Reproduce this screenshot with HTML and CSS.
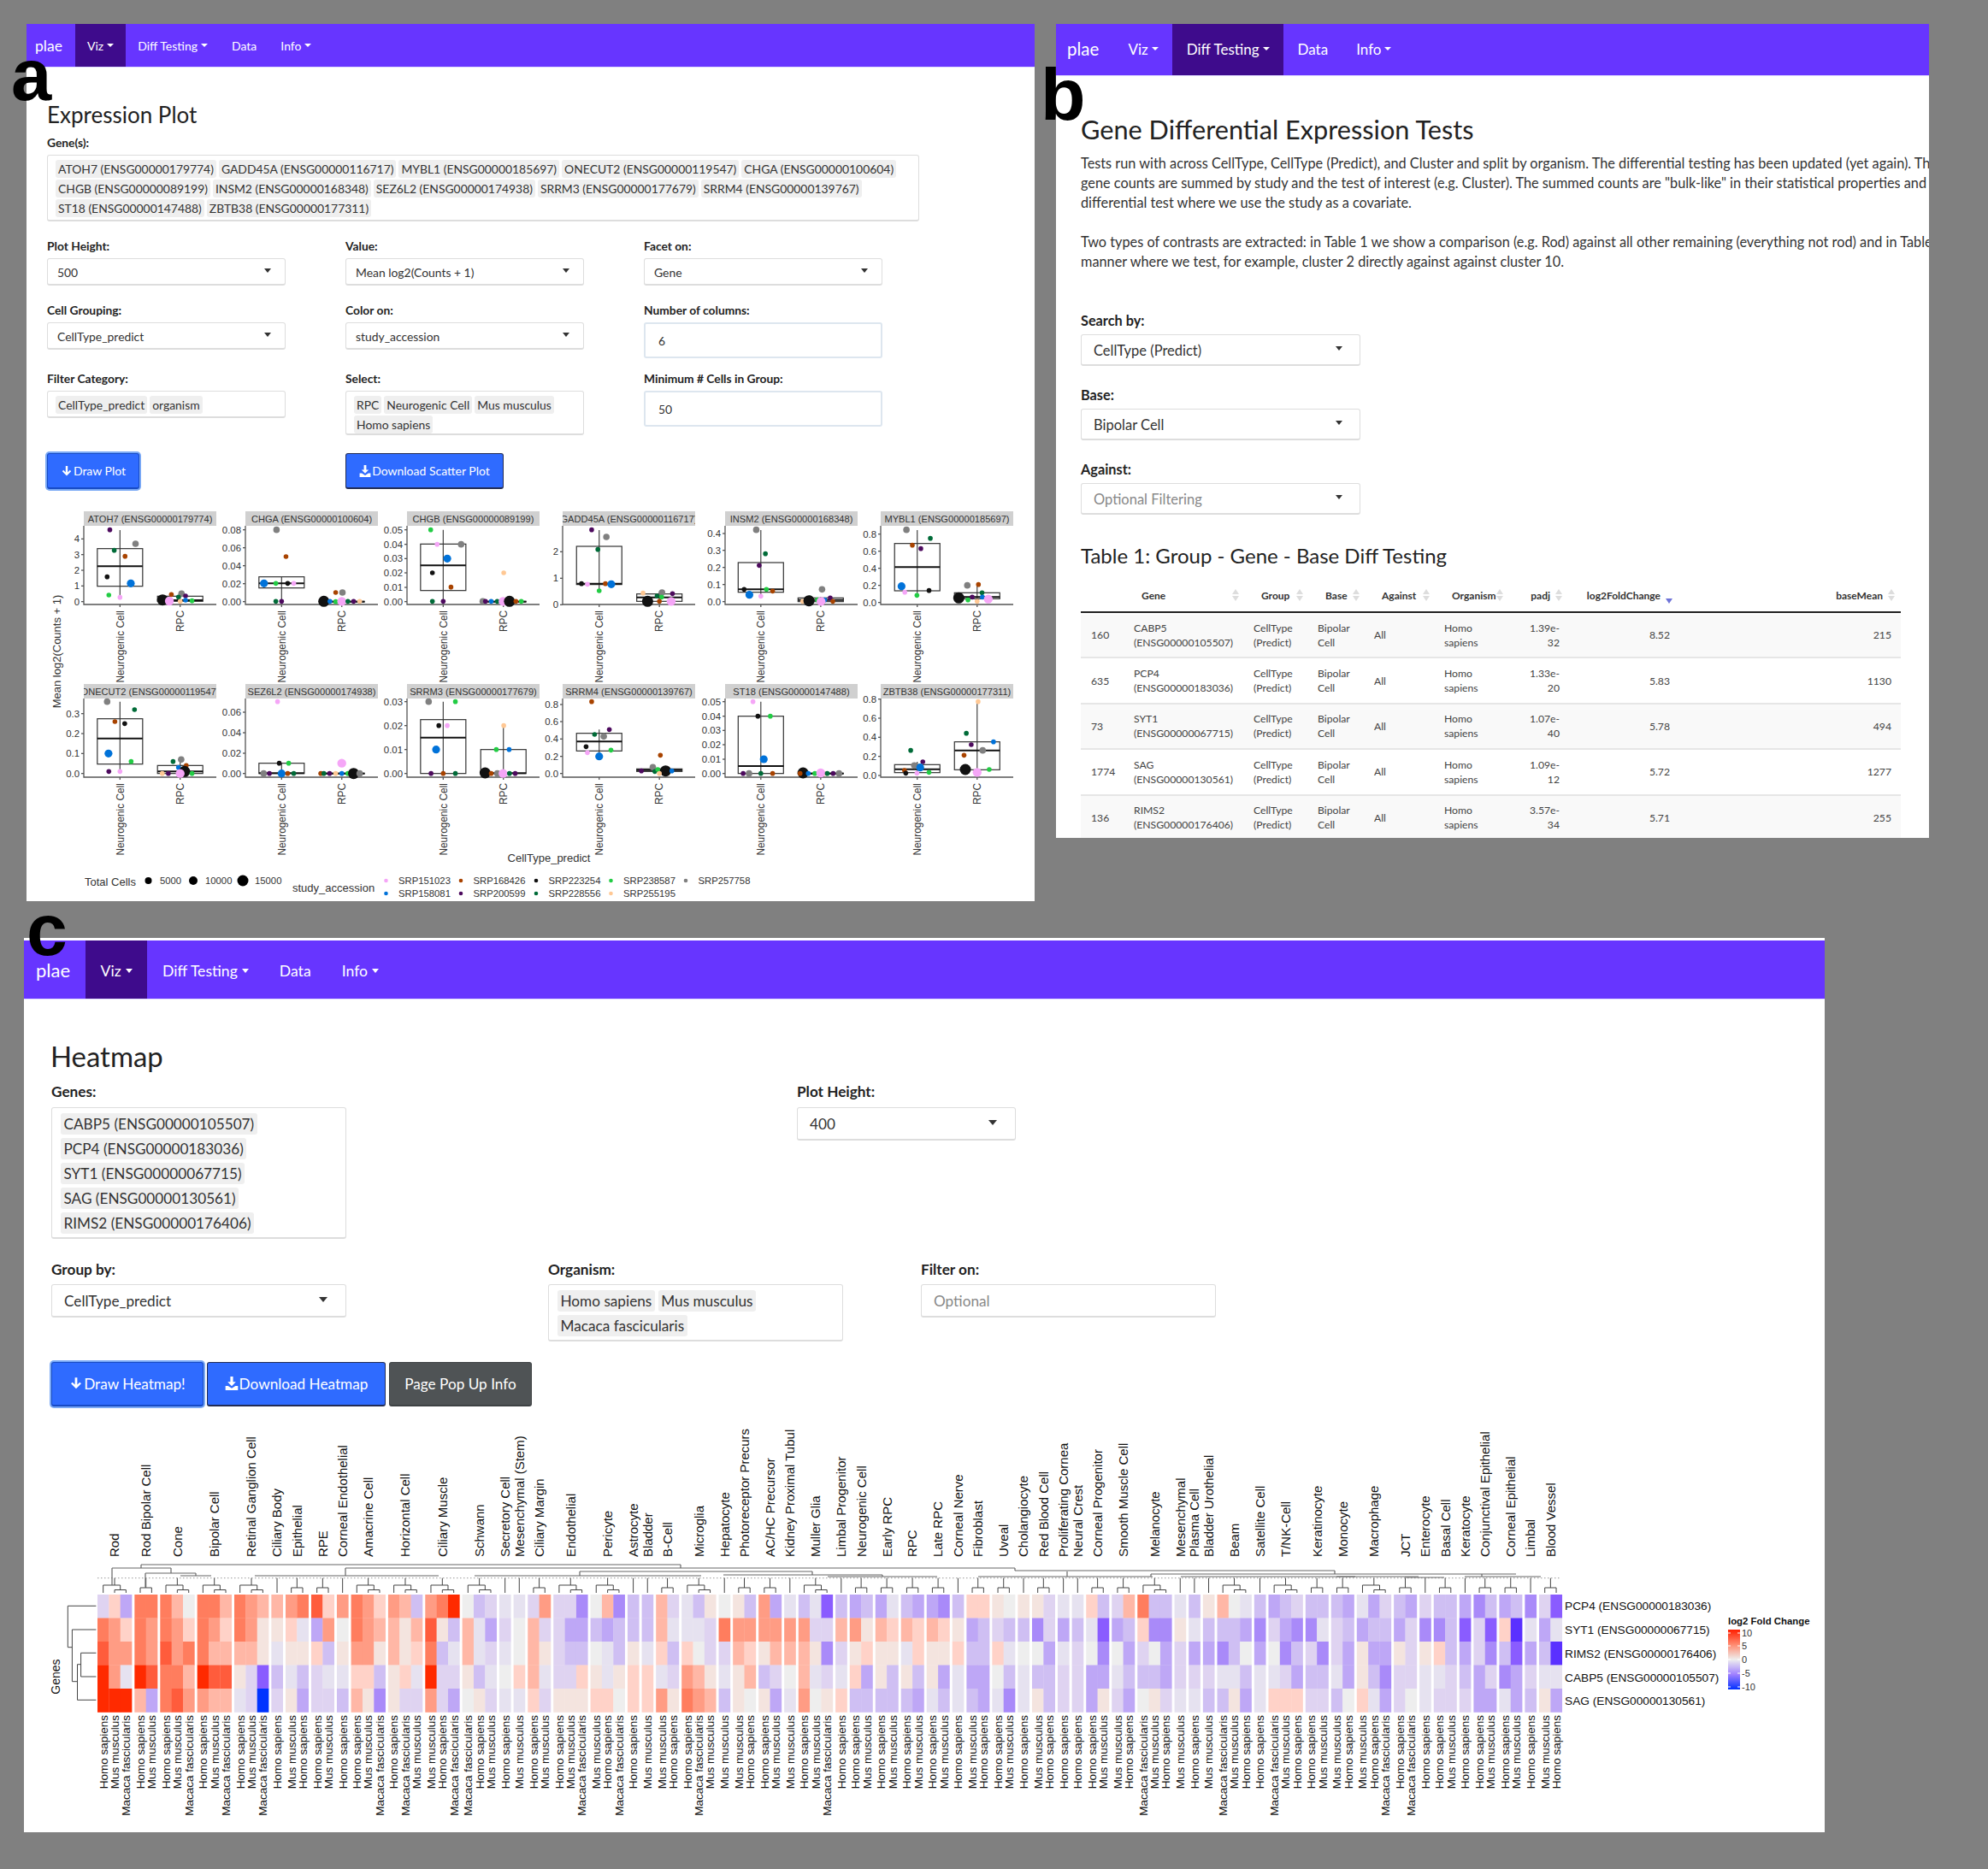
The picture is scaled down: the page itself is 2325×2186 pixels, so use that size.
FILE: index.html
```html
<!DOCTYPE html>
<html lang="en">
<head>
    <meta charset="UTF-8">
    <title>plae</title>
    <link rel="stylesheet" href="styles.css">
</head>
<body>

    <div class="top-row">

        <!-- a: expression plot -->
        <div class="panel panel-a">
            <span class="fig-label">a</span>
            <nav class="navbar">
                <span class="brand">plae</span>
                <a class="nav-item active">Viz<i class="caret"></i></a>
                <a class="nav-item">Diff Testing<i class="caret"></i></a>
                <a class="nav-item">Data</a>
                <a class="nav-item">Info<i class="caret"></i></a>
            </nav>
            <div class="content">
                <h2>Expression Plot</h2>
                <label>Gene(s):</label>
                <div class="tagbox gene-box">
                    <span class="tag">ATOH7 (ENSG00000179774)</span>
                    <span class="tag">GADD45A (ENSG00000116717)</span>
                    <span class="tag">MYBL1 (ENSG00000185697)</span>
                    <span class="tag">ONECUT2 (ENSG00000119547)</span>
                    <span class="tag">CHGA (ENSG00000100604)</span>
                    <span class="tag">CHGB (ENSG00000089199)</span>
                    <span class="tag">INSM2 (ENSG00000168348)</span>
                    <span class="tag">SEZ6L2 (ENSG00000174938)</span>
                    <span class="tag">SRRM3 (ENSG00000177679)</span>
                    <span class="tag">SRRM4 (ENSG00000139767)</span>
                    <span class="tag">ST18 (ENSG00000147488)</span>
                    <span class="tag">ZBTB38 (ENSG00000177311)</span>
                </div>
                <div class="form-grid">
                    <div><label>Plot Height:</label><div class="select">500</div></div>
                    <div><label>Value:</label><div class="select">Mean log2(Counts + 1)</div></div>
                    <div><label>Facet on:</label><div class="select">Gene</div></div>
                    <div><label>Cell Grouping:</label><div class="select">CellType_predict</div></div>
                    <div><label>Color on:</label><div class="select">study_accession</div></div>
                    <div><label>Number of columns:</label><div class="number">6</div></div>
                    <div>
                        <label>Filter Category:</label>
                        <div class="tagbox"><span class="tag">CellType_predict</span><span class="tag">organism</span></div>
                    </div>
                    <div>
                        <label>Select:</label>
                        <div class="tagbox">
                            <span class="tag">RPC</span><span class="tag">Neurogenic Cell</span><span class="tag">Mus musculus</span><span class="tag">Homo sapiens</span>
                        </div>
                    </div>
                    <div><label>Minimum # Cells in Group:</label><div class="number">50</div></div>
                    <div><button class="btn btn-focus"><svg class="icon" viewBox="0 0 14 14"><path d="M5.8 1h2.4v7.4l2.6-2.6 1.4 1.4L7 12.4 1.8 7.2l1.4-1.4 2.6 2.6z"/></svg>Draw Plot</button></div>
                    <div><button class="btn btn-wide"><svg class="icon" viewBox="0 0 14 14"><path d="M5.6 0h2.8v5.4h2.8L7 9.8 2.8 5.4h2.8zM0.6 9.6h2.6L7 12l3.8-2.4h2.6V14H0.6z"/></svg>Download Scatter Plot</button></div>
                </div>
                <svg id="boxPlots" class="plot" viewBox="31 590 1179 464"></svg>
            </div>
        </div>

        <!-- b: differential testing -->
        <div class="panel panel-b">
            <span class="fig-label">b</span>
            <div class="clip">
                <nav class="navbar">
                    <span class="brand">plae</span>
                    <a class="nav-item">Viz<i class="caret"></i></a>
                    <a class="nav-item active">Diff Testing<i class="caret"></i></a>
                    <a class="nav-item">Data</a>
                    <a class="nav-item">Info<i class="caret"></i></a>
                </nav>
                <div class="content">
                    <h2>Gene Differential Expression Tests</h2>
                    <p>Tests run with across CellType, CellType (Predict), and Cluster and split by organism. The differential testing has been updated (yet again). The<br>
                    gene counts are summed by study and the test of interest (e.g. Cluster). The summed counts are "bulk-like" in their statistical properties and we<br>
                    differential test where we use the study as a covariate.</p>
                    <p>Two types of contrasts are extracted: in Table 1 we show a comparison (e.g. Rod) against all other remaining (everything not rod) and in Table 2<br>
                    manner where we test, for example, cluster 2 directly against against cluster 10.</p>
                    <div class="stack">
                        <div><label>Search by:</label><div class="select">CellType (Predict)</div></div>
                        <div><label>Base:</label><div class="select">Bipolar Cell</div></div>
                        <div><label>Against:</label><div class="select placeholder">Optional Filtering</div></div>
                    </div>
                    <h3>Table 1: Group - Gene - Base Diff Testing</h3>
                    <table class="diff-table">
                        <colgroup>
                            <col class="c-id"><col class="c-gene"><col class="c-group"><col class="c-base"><col class="c-against">
                            <col class="c-org"><col class="c-padj"><col class="c-fold"><col class="c-mean">
                        </colgroup>
                        <thead>
                            <tr>
                                <th></th>
                                <th><div class="th-in">Gene<i class="sort"></i></div></th>
                                <th><div class="th-in">Group<i class="sort"></i></div></th>
                                <th><div class="th-in">Base<i class="sort"></i></div></th>
                                <th><div class="th-in">Against<i class="sort"></i></div></th>
                                <th><div class="th-in">Organism<i class="sort"></i></div></th>
                                <th><div class="th-in th-num">padj<i class="sort"></i></div></th>
                                <th><div class="th-in th-num">log2FoldChange<i class="sort sort-desc"></i></div></th>
                                <th><div class="th-in th-num">baseMean<i class="sort"></i></div></th>
                            </tr>
                        </thead>
                        <tbody>
                            <tr><td>160</td><td>CABP5 (ENSG00000105507)</td><td>CellType (Predict)</td><td>Bipolar Cell</td><td>All</td><td>Homo sapiens</td><td class="num">1.39e-32</td><td class="num">8.52</td><td class="num">215</td></tr>
                            <tr><td>635</td><td>PCP4 (ENSG00000183036)</td><td>CellType (Predict)</td><td>Bipolar Cell</td><td>All</td><td>Homo sapiens</td><td class="num">1.33e-20</td><td class="num">5.83</td><td class="num">1130</td></tr>
                            <tr><td>73</td><td>SYT1 (ENSG00000067715)</td><td>CellType (Predict)</td><td>Bipolar Cell</td><td>All</td><td>Homo sapiens</td><td class="num">1.07e-40</td><td class="num">5.78</td><td class="num">494</td></tr>
                            <tr><td>1774</td><td>SAG (ENSG00000130561)</td><td>CellType (Predict)</td><td>Bipolar Cell</td><td>All</td><td>Homo sapiens</td><td class="num">1.09e-12</td><td class="num">5.72</td><td class="num">1277</td></tr>
                            <tr><td>136</td><td>RIMS2 (ENSG00000176406)</td><td>CellType (Predict)</td><td>Bipolar Cell</td><td>All</td><td>Homo sapiens</td><td class="num">3.57e-34</td><td class="num">5.71</td><td class="num">255</td></tr>
                        </tbody>
                    </table>
                </div>
            </div>
        </div>
    </div>

    <!-- c: heatmap -->
    <div class="panel panel-c">
        <span class="fig-label">c</span>
        <nav class="navbar">
            <span class="brand">plae</span>
            <a class="nav-item active">Viz<i class="caret"></i></a>
            <a class="nav-item">Diff Testing<i class="caret"></i></a>
            <a class="nav-item">Data</a>
            <a class="nav-item">Info<i class="caret"></i></a>
        </nav>
        <div class="content">
            <h2>Heatmap</h2>
            <div class="row-top">
                <div class="col-wide">
                    <label>Genes:</label>
                    <div class="tagbox">
                        <span class="tag">CABP5 (ENSG00000105507)</span>
                        <span class="tag">PCP4 (ENSG00000183036)</span>
                        <span class="tag">SYT1 (ENSG00000067715)</span>
                        <span class="tag">SAG (ENSG00000130561)</span>
                        <span class="tag">RIMS2 (ENSG00000176406)</span>
                    </div>
                </div>
                <div class="col-height"><label>Plot Height:</label><div class="select">400</div></div>
            </div>
            <div class="row-filters">
                <div class="col-wide"><label>Group by:</label><div class="select">CellType_predict</div></div>
                <div class="col-wide">
                    <label>Organism:</label>
                    <div class="tagbox"><span class="tag">Homo sapiens</span><span class="tag">Mus musculus</span><span class="tag">Macaca fascicularis</span></div>
                </div>
                <div class="col-wide"><label>Filter on:</label><div class="text-input">Optional</div></div>
            </div>
            <div class="btn-row">
                <button class="btn btn-focus"><svg class="icon" viewBox="0 0 14 14"><path d="M5.8 1h2.4v7.4l2.6-2.6 1.4 1.4L7 12.4 1.8 7.2l1.4-1.4 2.6 2.6z"/></svg>Draw Heatmap!</button>
                <button class="btn"><svg class="icon" viewBox="0 0 14 14"><path d="M5.6 0h2.8v5.4h2.8L7 9.8 2.8 5.4h2.8zM0.6 9.6h2.6L7 12l3.8-2.4h2.6V14H0.6z"/></svg>Download Heatmap</button>
                <button class="btn btn-dark">Page Pop Up Info</button>
            </div>
            <svg id="heatmap" class="plot" viewBox="28 1660 2106 483"></svg>
        </div>
    </div>

    <script src="script.js"></script>
</body>
</html>
```

FILE: styles.css
```css
html, body {
    margin: 0;
    padding: 0;
    height: 2186px;
    overflow: hidden;
}

body {
    font-family: Lato, "Open Sans", sans-serif;
    background-color: #808080;
    color: #333;
    padding-top: 28px;
    box-sizing: border-box;
}

label {
    display: block;
    font-weight: 700;
    color: #222;
}

h2, h3 {
    margin: 0;
    font-weight: 400;
    color: #222;
}

.top-row {
    display: flex;
    gap: 25px;
    margin-left: 31px;
}

.panel {
    position: relative;
    background-color: #fff;
}

.fig-label {
    position: absolute;
    z-index: 2;
    font-family: "Liberation Sans", Arial, sans-serif;
    font-weight: 700;
    line-height: 1;
    color: #000;
}

/* navbar */
.navbar {
    display: flex;
    align-items: stretch;
    background-color: #6735ff;
    border-bottom: 1px solid #e2dcff;
    box-sizing: border-box;
    color: #fff;
}

.brand {
    display: flex;
    align-items: center;
}

.nav-item {
    display: flex;
    align-items: center;
}

.nav-item.active {
    background-color: #3e0b8c;
}

.caret {
    display: inline-block;
    margin-left: 4px;
    border-left: 4px solid transparent;
    border-right: 4px solid transparent;
    border-top: 4.5px solid #fff;
}

/* form controls */
.tagbox, .select, .number, .text-input {
    box-sizing: border-box;
    border: 1px solid #ddd;
    border-bottom-width: 2px;
    border-radius: 3px;
    background-color: #fff;
}

.tagbox {
    display: flex;
    flex-wrap: wrap;
    align-content: flex-start;
}

.tag {
    background-color: #efefef;
    border-radius: 3px;
    white-space: nowrap;
}

.select {
    position: relative;
    display: flex;
    align-items: center;
    padding-top: 1px;
}

.select::after {
    content: "";
    position: absolute;
    top: 50%;
    border-left: 4.5px solid transparent;
    border-right: 4.5px solid transparent;
    border-top: 5px solid #333;
    margin-top: -4px;
}

.select.placeholder, .text-input {
    color: #888;
}

.number, .text-input {
    display: flex;
    align-items: center;
}

.number {
    border: 2px solid #dde6ef;
}

.btn {
    display: inline-flex;
    align-items: center;
    justify-content: center;
    box-sizing: border-box;
    border: 1px solid #222c55;
    border-bottom-width: 2px;
    border-radius: 3px;
    background-color: #2f6bff;
    color: #fff;
    font-family: inherit;
    padding: 0;
}

.btn-focus {
    border-color: #174ac4;
    box-shadow: 0 0 0 2px #79a8f5;
}

.btn-dark {
    background-color: #4f5355;
    border-color: #3e4244;
}

.icon {
    fill: #fff;
    flex: none;
}

/* a */
.panel-a {
    width: 1179px;
    height: 1026px;
}

.panel-a .fig-label {
    left: -18px;
    top: 17px;
    font-size: 85px;
}

.panel-a .navbar {
    height: 51px;
    font-size: 14px;
}

.panel-a .brand {
    font-size: 17.5px;
    padding: 0 13px 0 10px;
    width: 57px;
    box-sizing: border-box;
}

.panel-a .nav-item {
    padding: 0 14px;
}

.panel-a .content {
    padding-left: 24px;
}

.panel-a h2 {
    font-size: 26px;
    line-height: 32px;
    padding-top: 39px;
    margin-bottom: 9px;
}

.panel-a label {
    font-size: 13.8px;
    line-height: 16px;
    margin-bottom: 6px;
}

.panel-a .tagbox {
    padding: 5px 9px 0;
    gap: 2px 3px;
    min-height: 32px;
    font-size: 13.9px;
}

.panel-a .tag {
    line-height: 21px;
    padding: 0 3px;
}

.panel-a .gene-box {
    width: 1020px;
    height: 78px;
}

.form-grid {
    display: grid;
    grid-template-columns: repeat(3, 279px);
    grid-template-rows: 75px 80px 95px 60px;
    column-gap: 70px;
    margin-top: 21px;
}

.panel-a .select {
    height: 32px;
    padding-left: 11px;
    font-size: 13.9px;
}

.panel-a .select::after {
    right: 16.5px;
}

.panel-a .number {
    height: 42px;
    padding-left: 15px;
    font-size: 13.9px;
}

.panel-a .btn {
    height: 42px;
    font-size: 14px;
}

.panel-a .btn-focus {
    width: 108px;
}

.panel-a .btn-wide {
    width: 185px;
}

.panel-a .icon {
    width: 14px;
    height: 16px;
    margin-right: 1px;
}

.plot {
    display: block;
}

#boxPlots {
    margin-left: -24px;
    width: 1179px;
    height: 464px;
}

/* b */
.panel-b {
    width: 1021px;
    height: 952px;
}

.panel-b .clip {
    height: 100%;
    overflow: hidden;
}

.panel-b .fig-label {
    left: -18px;
    top: 39px;
    font-size: 86px;
}

.panel-b .navbar {
    height: 61px;
    font-size: 17px;
}

.panel-b .brand, .panel-b .nav-item {
    padding-bottom: 2px;
}

.panel-b .brand {
    font-size: 20.5px;
    width: 68px;
    padding-left: 13px;
    box-sizing: border-box;
}

.panel-b .nav-item {
    padding-left: 16.5px;
    padding-right: 16.5px;
}

.panel-b .content {
    padding-left: 29px;
}

.panel-b h2 {
    font-size: 30.7px;
    line-height: 40px;
    padding-top: 43px;
    margin-bottom: 7px;
}

.panel-b p {
    margin: 0 0 23px;
    font-size: 16.3px;
    line-height: 23px;
    white-space: nowrap;
    color: #333;
}

.stack {
    margin-top: 49px;
    width: 327px;
    display: flex;
    flex-direction: column;
    gap: 25px;
}

.panel-b label {
    font-size: 16.3px;
    line-height: 18px;
    margin-bottom: 7px;
}

.panel-b .select {
    height: 37px;
    padding-left: 14px;
    font-size: 16.5px;
}

.panel-b .select::after {
    right: 20px;
}

.panel-b h3 {
    font-size: 24px;
    line-height: 34px;
    margin-top: 31px;
}

.diff-table {
    width: 959px;
    margin-top: 12px;
    border-collapse: separate;
    border-spacing: 0;
    table-layout: fixed;
    font-size: 12.2px;
    line-height: 17px;
}

.c-id { width: 52px; }
.c-gene { width: 140px; }
.c-group { width: 75px; }
.c-base { width: 66px; }
.c-against { width: 82px; }
.c-org { width: 86px; }
.c-padj { width: 69px; }
.c-fold { width: 129px; }
.c-mean { width: 260px; }

.diff-table th {
    height: 38px;
    padding: 0;
    box-sizing: border-box;
    border-bottom: 2px solid #222;
    font-weight: 700;
    font-size: 12px;
    vertical-align: top;
    color: #333;
}

.th-in {
    display: flex;
    justify-content: space-between;
    align-items: center;
    height: 34px;
    padding: 0 7px 0 19px;
}

.th-num {
    justify-content: flex-end;
    gap: 6px;
}

.sort {
    position: relative;
    display: inline-block;
    width: 8px;
    height: 14px;
    flex: none;
}

.sort::before, .sort::after {
    content: "";
    position: absolute;
    left: 0;
    border-left: 4px solid transparent;
    border-right: 4px solid transparent;
}

.sort::before {
    top: 0;
    border-bottom: 6px solid #ddd;
}

.sort::after {
    bottom: 0;
    border-top: 6px solid #ddd;
}

.sort-desc::before {
    display: none;
}

.sort-desc::after {
    bottom: -3px;
    border-top-color: #6f74d8;
}

.diff-table td {
    height: 53.4px;
    box-sizing: border-box;
    padding: 0 10px;
    border-bottom: 2px solid #e6e6e6;
    color: #444;
}

.diff-table td:first-child {
    padding-left: 12px;
}

.diff-table td.num {
    text-align: right;
}

.diff-table td:last-child {
    padding-right: 11px;
}

.diff-table tbody tr:nth-child(odd) td {
    background-color: #f9f9f9;
}

.diff-table tbody tr:first-child td {
    box-shadow: inset 0 2px 0 #fff;
}

/* c */
.panel-c {
    width: 2106px;
    height: 1046px;
    margin-top: 43px;
    margin-left: 28px;
    padding-top: 3px;
    box-sizing: border-box;
}

.panel-c .fig-label {
    left: 3px;
    top: -53px;
    font-size: 86px;
}

.panel-c .navbar {
    height: 69px;
    font-size: 17.6px;
}

.panel-c .brand {
    font-size: 22px;
    width: 72px;
    padding-left: 14px;
    box-sizing: border-box;
}

.panel-c .nav-item {
    padding: 2px 17.5px 0;
}

.panel-c .nav-item + .nav-item {
    padding-left: 18px;
    padding-right: 18px;
}

.panel-c .caret {
    margin-left: 5px;
    border-left-width: 4.5px;
    border-right-width: 4.5px;
    border-top-width: 5px;
}

.panel-c .content {
    padding-left: 32px;
}

.panel-c h2 {
    font-size: 32.9px;
    line-height: 44px;
    padding-top: 45px;
    margin-bottom: 9px;
    margin-left: -1px;
}

.panel-c label {
    font-size: 17.2px;
    line-height: 20px;
    margin-bottom: 7.5px;
}

.row-top {
    display: flex;
    gap: 527px;
}

.row-filters {
    display: flex;
    margin-top: 26px;
    height: 94px;
}

.col-wide {
    width: 345px;
}

.row-filters .col-wide:nth-child(2) {
    margin-left: 236px;
}

.row-filters .col-wide:nth-child(3) {
    margin-left: 91px;
}

.col-height {
    width: 256px;
}

.panel-c .tagbox {
    padding: 6px 10px 0;
    gap: 4px;
    font-size: 17.2px;
}

.panel-c .row-top .tagbox {
    height: 154px;
    flex-direction: column;
    flex-wrap: nowrap;
    align-items: flex-start;
}

.panel-c .tag {
    line-height: 25px;
    padding: 0 3.5px;
}

.panel-c .row-filters .tagbox {
    height: 67px;
}

.panel-c .select, .panel-c .text-input {
    height: 39px;
    padding-left: 14px;
    font-size: 17.2px;
}

.panel-c .select::after {
    right: 21.5px;
    border-left-width: 5.5px;
    border-right-width: 5.5px;
    border-top-width: 6px;
}

.btn-row {
    display: flex;
    gap: 4px;
    margin-top: 24px;
}

.panel-c .btn {
    height: 52px;
    font-size: 17.2px;
}

.btn-row .btn:nth-child(1) { width: 178px; }
.btn-row .btn:nth-child(2) { width: 209px; }
.btn-row .btn:nth-child(3) { width: 167px; }

.panel-c .icon {
    width: 16px;
    height: 18px;
    margin-right: 1px;
}

#heatmap {
    margin-left: -32px;
    margin-top: 15px;
    width: 2106px;
    height: 483px;
}

/* svg text and lines */
.plot text {
    font-family: "Liberation Sans", Arial, sans-serif;
    fill: #333;
}

.strip { fill: #d0d0d0; }
.strip-text { font-size: 11.1px; text-anchor: middle; fill: #222; }
.axis { stroke: #555; stroke-width: 1.3; fill: none; }
.box { stroke: #333; stroke-width: 1.2; fill: none; }
.whisker { stroke: #444; stroke-width: 1.2; }
.median { stroke: #111; stroke-width: 2; }
.tick-label { font-size: 11.4px; text-anchor: end; }
.cat-label { font-size: 11.9px; text-anchor: end; }
.axis-title { font-size: 13px; text-anchor: middle; }
.legend-title { font-size: 13px; }
.legend-text { font-size: 11.3px; }

.tree { stroke: #444; stroke-width: 1; fill: none; }
.tree-top { stroke: #666; stroke-width: 1.2; fill: none; }
.cut { stroke: #999; stroke-width: 1; stroke-dasharray: 1.5 2.5; }
.scale-tick { stroke: #fff; stroke-width: 1; }
.plot .heat-label { font-size: 15px; fill: #111; }
.plot .heat-species { font-size: 13.5px; fill: #111; text-anchor: end; }
.plot .gene-label { font-size: 13.7px; fill: #111; }
.plot .genes-title { font-size: 14px; fill: #111; text-anchor: middle; }
.plot .scale-title { font-size: 11.4px; font-weight: 700; fill: #111; }
.plot .scale-text { font-size: 11px; }
```

FILE: script.js
```js
// draws the two figures from the numbers read off them

const studyColors = {
    p: '#f5a6f7', b: '#0072d9', r: '#a84300', v: '#4d0a5e', k: '#111111',
    d: '#006b38', g: '#22cc44', o: '#ffc894', a: '#808080'
};
const neuroSize = { a: 3.8, b: 4.6 };
const rpcSize = { k: 6.5, p: 5.2, a: 3.8 };

function line(x1, y1, x2, y2, cls) {
    return `<line class="${cls}" x1="${x1}" y1="${y1}" x2="${x2}" y2="${y2}"/>`;
}

function vtext(x, y, str, cls) {
    return `<text class="${cls}" x="${x}" y="${y}" dy="0.36em" transform="rotate(-90 ${x} ${y})">${str}</text>`;
}

// facet plots: x,y below are measured on a stretched grid, see toX / toY
const facets = [
    { title: 'ATOH7 (ENSG00000179774)', col: 0, row: 0, cols: [279, 457], zone: 0,
      ticks: [['4', 121], ['3', 176], ['2', 231], ['1', 286], ['0', 341]],
      boxes: [[155, 287, 217, 90, 330], [322, 340, 336, 305, 340]],
      neuro: 'v249,89 a325,138 d262,161 r294,182 k241,254 b311,277 g246,318 p279,326',
      rpc: 'k405,335 r431,316 a461,313 d452,325 v473,321 p425,339 o457,340 b473,336 g492,338' },
    { title: 'CHGA (ENSG00000100604)', col: 1, row: 0, cols: [757, 935], zone: 0,
      ticks: [['0.08', 89], ['0.06', 152], ['0.04', 215], ['0.02', 278], ['0.00', 341]],
      boxes: [[254, 293, 277, 254, 341], [340, 342, 341, 340, 342]],
      neuro: 'a742,89 r770,183 b705,277 g740,277 k775,277 p793,277 d740,340 v757,340',
      rpc: 'r917,309 a937,309 k882,340 b900,340 g917,341 p935,340 d953,340 v970,340 o988,340' },
    { title: 'CHGB (ENSG00000089199)', col: 2, row: 0, cols: [1235, 1413], zone: 0,
      ticks: [['0.05', 89], ['0.04', 140], ['0.03', 190], ['0.02', 240], ['0.01', 291], ['0.00', 341]],
      boxes: [[139, 302, 214, 89, 341], [340, 342, 341, 340, 342]],
      neuro: 'g1198,89 p1217,140 a1288,140 b1247,190 k1203,240 r1258,290 d1203,340 v1235,340',
      rpc: 'a1352,340 v1360,340 b1377,340 d1395,340 o1414,240 p1412,340 k1431,340 r1450,340 g1466,340' },
    { title: 'GADD45A (ENSG00000116717)', col: 3, row: 0, cols: [211, 395], zone: 1,
      ticks: [['2', 166], ['1', 259], ['0', 352]],
      boxes: [[147, 281, 278, 90, 300], [314, 340, 326, 305, 345]],
      neuro: 'v188,89 a233,114 d207,158 k157,278 p175,280 r230,278 b248,280 g211,303',
      rpc: 'o345,311 a403,309 v435,313 d388,321 g402,325 k359,340 r395,340 p431,340' },
    { title: 'INSM2 (ENSG00000168348)', col: 4, row: 0, cols: [705, 888], zone: 1,
      ticks: [['0.4', 102], ['0.3', 161], ['0.2', 221], ['0.1', 281], ['0.0', 341]],
      boxes: [[204, 308, 298, 90, 320], [328, 341, 335, 325, 342]],
      neuro: 'a691,89 d719,173 v700,214 k654,298 g722,298 r741,304 b670,317 p705,322',
      rpc: 'a892,298 d855,328 g878,335 b900,335 v917,328 o833,340 k852,338 p889,340 r925,340' },
    { title: 'MYBL1 (ENSG00000185697)', col: 5, row: 0, cols: [1183, 1366], zone: 1,
      ticks: [['0.8', 104], ['0.6', 164], ['0.4', 224], ['0.2', 284], ['0.0', 344]],
      boxes: [[137, 303, 220, 90, 320], [310, 331, 325, 285, 340]],
      neuro: 'a1150,89 d1223,119 r1168,143 v1194,155 b1135,287 k1219,302 p1145,308 g1182,319',
      rpc: 'a1336,284 r1370,281 d1381,310 k1310,328 v1351,325 b1382,325 g1338,335 o1366,340 p1400,332' },
    { title: 'ONECUT2 (ENSG00000119547)', col: 0, row: 1, cols: [279, 457], zone: 0,
      ticks: [['0.3', 734], ['0.2', 804], ['0.1', 874], ['0.0', 944]],
      boxes: [[752, 911, 821, 692, 944], [916, 944, 937, 895, 944]],
      neuro: 'a241,692 d322,720 r264,762 k293,769 b245,874 g312,902 v246,937 p279,937',
      rpc: 'd436,902 a460,895 r475,916 b452,923 k470,937 o404,944 v422,944 p457,944 g492,944' },
    { title: 'SEZ6L2 (ENSG00000174938)', col: 1, row: 1, cols: [757, 935], zone: 0,
      ticks: [['0.06', 729], ['0.04', 801], ['0.02', 873], ['0.00', 944]],
      boxes: [[908, 944, 943, 908, 944], [943, 945, 944, 943, 945]],
      neuro: 'p745,692 k750,908 g778,908 a704,944 v721,944 b757,944 r775,944 d793,944',
      rpc: 'r873,944 d882,944 v899,944 o917,944 b935,944 p935,908 g953,944 k970,944 a988,944' },
    { title: 'SRRM3 (ENSG00000177679)', col: 2, row: 1, cols: [1235, 1413], zone: 0,
      ticks: [['0.03', 692], ['0.02', 776], ['0.01', 860], ['0.00', 944]],
      boxes: [[755, 944, 818, 692, 944], [860, 944, 943, 776, 944]],
      neuro: 'a1192,692 g1271,692 k1222,776 p1247,776 b1214,860 v1199,944 r1235,944 d1271,944',
      rpc: 'o1414,776 g1392,860 b1430,860 k1359,942 r1377,944 a1395,944 p1412,944 d1431,944 v1448,944' },
    { title: 'SRRM4 (ENSG00000139767)', col: 3, row: 1, cols: [211, 395], zone: 1,
      ticks: [['0.8', 702], ['0.6', 762], ['0.4', 823], ['0.2', 884], ['0.0', 944]],
      boxes: [[803, 865, 832, 790, 880], [928, 937, 932, 925, 940]],
      neuro: 'r188,692 v242,790 d197,807 a225,814 k171,850 g247,862 p175,871 b211,884',
      rpc: 'r398,880 a375,922 v340,935 d381,937 g390,930 k414,935 b433,935 o395,944' },
    { title: 'ST18 (ENSG00000147488)', col: 4, row: 1, cols: [705, 888], zone: 1,
      ticks: [['0.05', 692], ['0.04', 743], ['0.03', 793], ['0.02', 843], ['0.01', 894], ['0.00', 944]],
      boxes: [[743, 944, 918, 692, 944], [943, 945, 944, 943, 945]],
      neuro: 'p681,692 k696,743 g734,743 b714,894 v651,944 a669,944 d705,944 r741,944',
      rpc: 'k834,942 r825,944 b850,944 g870,944 o898,944 p888,942 d908,944 v926,944 a944,944' },
    { title: 'ZBTB38 (ENSG00000177311)', col: 5, row: 1, cols: [1183, 1366], zone: 1,
      ticks: [['0.8', 683], ['0.6', 750], ['0.4', 817], ['0.2', 884], ['0.0', 951]],
      boxes: [[913, 941, 929, 903, 945], [833, 931, 863, 692, 945]],
      neuro: 'd1163,863 v1200,903 a1174,916 r1144,933 b1192,923 k1148,943 p1182,943 g1219,940',
      rpc: 'o1369,692 d1333,803 b1416,833 v1348,843 a1383,863 r1326,880 k1330,930 g1403,930 p1366,940' }
];

const facetLeft = [98, 287, 476, 658, 848, 1030];
const toX = (x, zone) => zone === 0 ? 30 + x / 2.529 : 620 + x / 2.613;
const toY = y => 590 + y / 3;

function drawPoints(str, sizes, zone) {
    return str.split(' ').map(p => {
        const [x, y] = p.slice(1).split(',').map(Number);
        const key = p[0];
        return `<circle cx="${toX(x, zone)}" cy="${toY(y)}" r="${sizes[key] || 2.8}" fill="${studyColors[key]}"/>`;
    }).join('');
}

function drawFacet(f) {
    const left = facetLeft[f.col];
    const stripTop = 598 + f.row * 202;
    const axisY = stripTop + 109;
    const halfBox = 26.5;
    let s = '';

    s += `<svg x="${left}" y="${stripTop}" width="155" height="17">`;
    s += `<rect class="strip" width="155" height="17"/>`;
    s += `<text class="strip-text" x="77.5" y="12.8">${f.title}</text></svg>`;

    f.ticks.forEach(t => {
        const y = toY(t[1]);
        s += line(left - 3, y, left, y, 'axis');
        s += `<text class="tick-label" x="${left - 5}" y="${y}" dy="0.36em">${t[0]}</text>`;
    });
    s += `<path class="axis" d="M${left} ${stripTop + 17}V${axisY}H${left + 155}"/>`;

    f.cols.forEach((c, i) => {
        const x = toX(c, f.zone);
        const b = f.boxes[i];
        s += line(x, axisY, x, axisY + 3, 'axis');
        s += line(x, toY(b[3]), x, toY(b[4]), 'whisker');
        s += `<rect class="box" x="${x - halfBox}" y="${toY(b[0])}" width="${halfBox * 2}" height="${toY(b[1]) - toY(b[0])}"/>`;
        s += line(x - halfBox, toY(b[2]), x + halfBox, toY(b[2]), 'median');
        s += vtext(x, axisY + 7, i === 0 ? 'Neurogenic Cell' : 'RPC', 'cat-label');
    });

    s += drawPoints(f.neuro, neuroSize, f.zone);
    s += drawPoints(f.rpc, rpcSize, f.zone);
    return s;
}

function drawLegend() {
    let s = '';
    s += vtext(66, 762, 'Mean log2(Counts + 1)', 'axis-title');
    s += `<text class="axis-title" x="642" y="1003" dy="0.36em">CellType_predict</text>`;

    s += `<text class="legend-title" x="99" y="1031" dy="0.36em">Total Cells</text>`;
    [[173.5, 4, 187, '5000'], [226, 5, 240, '10000'], [284, 6.5, 298, '15000']].forEach(l => {
        s += `<circle cx="${l[0]}" cy="1030" r="${l[1]}" fill="#000"/>`;
        s += `<text class="legend-text" x="${l[2]}" y="1030" dy="0.36em">${l[3]}</text>`;
    });
    s += `<text class="legend-title" x="342" y="1038" dy="0.36em">study_accession</text>`;

    const studies = [
        [451.5, 1030, 'p', 'SRP151023'], [451.5, 1045, 'b', 'SRP158081'],
        [539, 1030, 'r', 'SRP168426'], [539, 1045, 'v', 'SRP200599'],
        [627, 1030, 'k', 'SRP223254'], [627, 1045, 'd', 'SRP228556'],
        [714.5, 1030, 'g', 'SRP238587'], [714.5, 1045, 'o', 'SRP255195'],
        [802, 1030, 'a', 'SRP257758']
    ];
    studies.forEach(l => {
        s += `<circle cx="${l[0]}" cy="${l[1]}" r="2.3" fill="${studyColors[l[2]]}"/>`;
        s += `<text class="legend-text" x="${l[0] + 14.5}" y="${l[1]}" dy="0.36em">${l[3]}</text>`;
    });
    return s;
}

document.getElementById('boxPlots').innerHTML = facets.map(drawFacet).join('') + drawLegend();

// heatmap: one string per column, rows top to bottom PCP4 SYT1 RIMS2 CABP5 SAG
const heatColors = {
    A: '#ff2a00', B: '#ff5c3c', C: '#ff7d5e', D: '#ff9c84', E: '#ffb7a6', F: '#ffd2c8',
    G: '#f4e4df', H: '#eeeeee', I: '#e6e2f0', J: '#dfd3f1', K: '#cfbff3', L: '#bea7f6',
    M: '#a98af9', N: '#8a5cff', O: '#5a30ff', P: '#0033ff'
};
const species = { h: 'Homo sapiens', m: 'Mus musculus', f: 'Macaca fascicularis' };

const groups = [
    ['Rod', 'h:JCBAA m:FDDDA f:LFDIA'],
    ['Rod Bipolar Cell', 'h:CCCAE m:CDDBL'],
    ['Cone', 'h:CCBCC m:EDDCB f:HFCED'],
    ['Bipolar Cell', 'h:CCCAD m:CDEBE f:EFEBE'],
    ['Retinal Ganglion Cell', 'h:CCEGI m:DDEJJ f:EGGNP'],
    ['Ciliary Body', 'h:EGIKJ'],
    ['Epithelial', 'm:DFGIG h:CIGKL'],
    ['RPE', 'h:BLFJJ m:FDKIJ'],
    ['Corneal Endothelial', 'h:DHGIK'],
    ['Amacrine Cell', 'h:CCDFE m:DDDFG f:FEGKM'],
    ['Horizontal Cell', 'h:DEEGG f:EGGFJ m:KEFIJ'],
    ['Ciliary Muscle', 'm:DBCAD h:CGKJJ f:AKIJL'],
    ['Schwann', 'f:HEEGH h:KIIKG m:JLJIJ'],
    ['Secretory Cell', 'h:IJIHI'],
    ['Mesenchymal (Stem)', 'm:IHHFI'],
    ['Ciliary Margin', 'h:JEEEF m:DJGIJ'],
    ['Endothelial', 'h:JJJJG m:JLKJG f:MLKFG'],
    ['Pericyte', 'm:HKHGF h:ELIIF f:MKKGH'],
    ['Astrocyte', 'h:KKGFF'],
    ['Bladder', 'm:KKIFF'],
    ['B-Cell', 'm:EEFID h:JIKJG'],
    ['Microglia', 'h:IIFDC f:KIHED m:GJJGE'],
    ['Hepatocyte', 'm:HCJIK'],
    ['Photoreceptor Precurs', 'm:GDEGG h:KDFEH'],
    ['AC/HC Precursor', 'h:DDGKG m:LDEJL'],
    ['Kidney Proximal Tubul', 'm:IDEHI'],
    ['Muller Glia', 'h:KDEED m:IJGIH f:NJMJG'],
    ['Limbal Progenitor', 'h:KEJIF'],
    ['Neurogenic Cell', 'h:LDGFK m:KGFLK'],
    ['Early RPC', 'h:LEGGK m:IFGKK'],
    ['RPC', 'h:KEIGK m:LFFKL'],
    ['Late RPC', 'h:LEGGI m:MFGLK'],
    ['Corneal Nerve', 'h:KGFII'],
    ['Fibroblast', 'm:FLKLK h:FKKLL'],
    ['Uveal', 'h:GJFHI m:HKIKM'],
    ['Cholangiocyte', 'h:GKHII'],
    ['Red Blood Cell', 'm:GMHKG h:JJLKK'],
    ['Proliferating Cornea', 'h:ILIJJ'],
    ['Neural Crest', 'h:IKJJJ'],
    ['Corneal Progenitor', 'h:FIHLL m:KNMLG'],
    ['Smooth Muscle Cell', 'm:JLHIJ h:EKLKL'],
    ['Melanocyte', 'f:CFJKH m:KMHKG h:KMLLJ'],
    ['Mesenchymal', 'm:IGJJI'],
    ['Plasma Cell', 'h:KILJI'],
    ['Bladder Urothelial', 'm:GKLJK'],
    ['Beam', 'f:EKMIK m:HKKIG h:ILHKL'],
    ['Satellite Cell', 'h:KMLII'],
    ['T/NK-Cell', 'f:LJHIF m:KLMJF h:JMKLF'],
    ['Keratinocyte', 'h:KMJKJ m:KIMKJ'],
    ['Monocyte', 'm:KJJIK h:LKLLH'],
    ['Macrophage', 'm:ILGGF h:LKLKI f:JKLML'],
    ['JCT', 'h:KLGJJ f:LJJJH'],
    ['Enterocyte', 'h:JMGII'],
    ['Basal Cell', 'h:KMFIJ m:KKKJJ'],
    ['Keratocyte', 'h:LNLKJ'],
    ['Conjunctival Epithelial', 'h:MJJLL m:KNMJL'],
    ['Corneal Epithelial', 'h:LFKMI m:KONLL'],
    ['Limbal', 'h:MILJK'],
    ['Blood Vessel', 'm:JLKIG h:NIOIL']
];

const cellW = 13.35;
const groupGap = 3.29;
const rowH = 27.5;
const heatTop = 1865;
const cutY = 1845.7;

const treeTop = [
    [165, 1830, 796, 1830], [165, 1830, 165, 1834], [796, 1830, 796, 1834],
    [131, 1834, 200, 1834], [131, 1834, 131, 1854], [200, 1834, 200, 1840], [170, 1840, 229, 1840],
    [170, 1840, 170, 1857], [229, 1840, 229, 1843], [211, 1843, 247, 1843],
    [404, 1834, 1187, 1834], [404, 1834, 404, 1843], [298, 1843, 513, 1843],
    [678, 1838, 950, 1838], [678, 1838, 678, 1843], [555, 1843, 820, 1843],
    [1187, 1834, 1187, 1837], [1187, 1837, 1561, 1837], [950, 1838, 950, 1842],
    [846, 1842, 1032, 1842], [1032, 1842, 1032, 1844], [968, 1844, 1096, 1844],
    [1144, 1844, 1348, 1844], [1248, 1838, 1248, 1844],
    [1561, 1837, 1561, 1841], [1346, 1841, 1773, 1841], [1346, 1841, 1346, 1844],
    [1381, 1844, 1585, 1844], [1563, 1844, 1659, 1844], [1643, 1845, 1689, 1845],
    [1713, 1844, 1802, 1844], [1733, 1841, 1733, 1844]
];

const rowTree = [
    [79.3, 1878.3, 112.4, 1878.3], [79.3, 1878.3, 79.3, 1926.7], [79.3, 1926.7, 84.4, 1926.7],
    [84.4, 1906, 84.4, 1966.7], [84.4, 1906, 112.4, 1906], [84.4, 1966.7, 90.5, 1966.7],
    [90.5, 1946.7, 90.5, 1988.3], [90.5, 1988.3, 112.4, 1988.3], [90.5, 1946.7, 94.6, 1946.7],
    [94.6, 1933.3, 94.6, 1961], [94.6, 1933.3, 112.4, 1933.3], [94.6, 1961, 112.4, 1961]
];

const rowLabels = [
    ['PCP4 (ENSG00000183036)', 1878], ['SYT1 (ENSG00000067715)', 1906],
    ['RIMS2 (ENSG00000176406)', 1934], ['CABP5 (ENSG00000105507)', 1962],
    ['SAG (ENSG00000130561)', 1989]
];

function drawHeatmap() {
    let cells = '';
    let labels = '';
    let tree = '';
    let x = 114;

    groups.forEach(g => {
        const cols = g[1].split(' ');
        const width = cols.length * cellW;
        const mid = x + width / 2;

        cols.forEach((c, i) => {
            const [sp, vals] = c.split(':');
            const cx = x + i * cellW;
            vals.split('').forEach((v, r) => {
                cells += `<rect x="${cx}" y="${heatTop + r * rowH}" width="${cellW + 0.3}" height="${rowH + 0.3}" fill="${heatColors[v]}"/>`;
            });
            labels += vtext(cx + cellW / 2, 2006, species[sp], 'heat-species');
        });
        labels += vtext(mid, 1821, g[0], 'heat-label');

        const c0 = x + cellW / 2;
        if (cols.length === 1) {
            tree += line(c0, 1863, c0, cutY, 'tree');
        } else if (cols.length === 2) {
            tree += `<path class="tree" d="M${c0} 1863V1857H${c0 + cellW}V1863"/>`;
            tree += line(mid, 1857, mid, cutY, 'tree');
        } else {
            const pair = c0 + cellW * 1.5;
            tree += `<path class="tree" d="M${c0 + cellW} 1863V1859.5H${c0 + cellW * 2}V1863"/>`;
            tree += `<path class="tree" d="M${c0} 1863V1854H${pair}V1859.5"/>`;
            tree += line(mid, 1854, mid, cutY, 'tree');
        }
        x += width + groupGap;
    });

    let s = line(114, cutY, 1826, cutY, 'cut');
    s += tree;
    treeTop.forEach(l => { s += line(l[0], l[1], l[2], l[3], 'tree-top'); });
    rowTree.forEach(l => { s += line(l[0], l[1], l[2], l[3], 'tree'); });
    s += cells + labels;

    s += vtext(64.5, 1961, 'Genes', 'genes-title');
    rowLabels.forEach(l => {
        s += `<text class="gene-label" x="1830" y="${l[1]}" dy="0.36em">${l[0]}</text>`;
    });

    s += `<text class="scale-title" x="2021" y="1896" dy="0.36em">log2 Fold Change</text>`;
    s += `<defs><linearGradient id="foldScale" x1="0" y1="0" x2="0" y2="1">
        <stop offset="0" stop-color="#ff1e00"/><stop offset="0.25" stop-color="#ff8a70"/>
        <stop offset="0.5" stop-color="#eeeeee"/><stop offset="0.75" stop-color="#a080ff"/>
        <stop offset="1" stop-color="#0030ff"/></linearGradient></defs>`;
    s += `<rect x="2021" y="1906" width="14" height="70" fill="url(#foldScale)"/>`;
    [['10', 1910], ['5', 1925], ['0', 1941], ['-5', 1957], ['-10', 1973]].forEach(t => {
        s += line(2021, t[1], 2024, t[1], 'scale-tick') + line(2032, t[1], 2035, t[1], 'scale-tick');
        s += `<text class="scale-text" x="2037" y="${t[1]}" dy="0.36em">${t[0]}</text>`;
    });
    return s;
}

document.getElementById('heatmap').innerHTML = drawHeatmap();
```
